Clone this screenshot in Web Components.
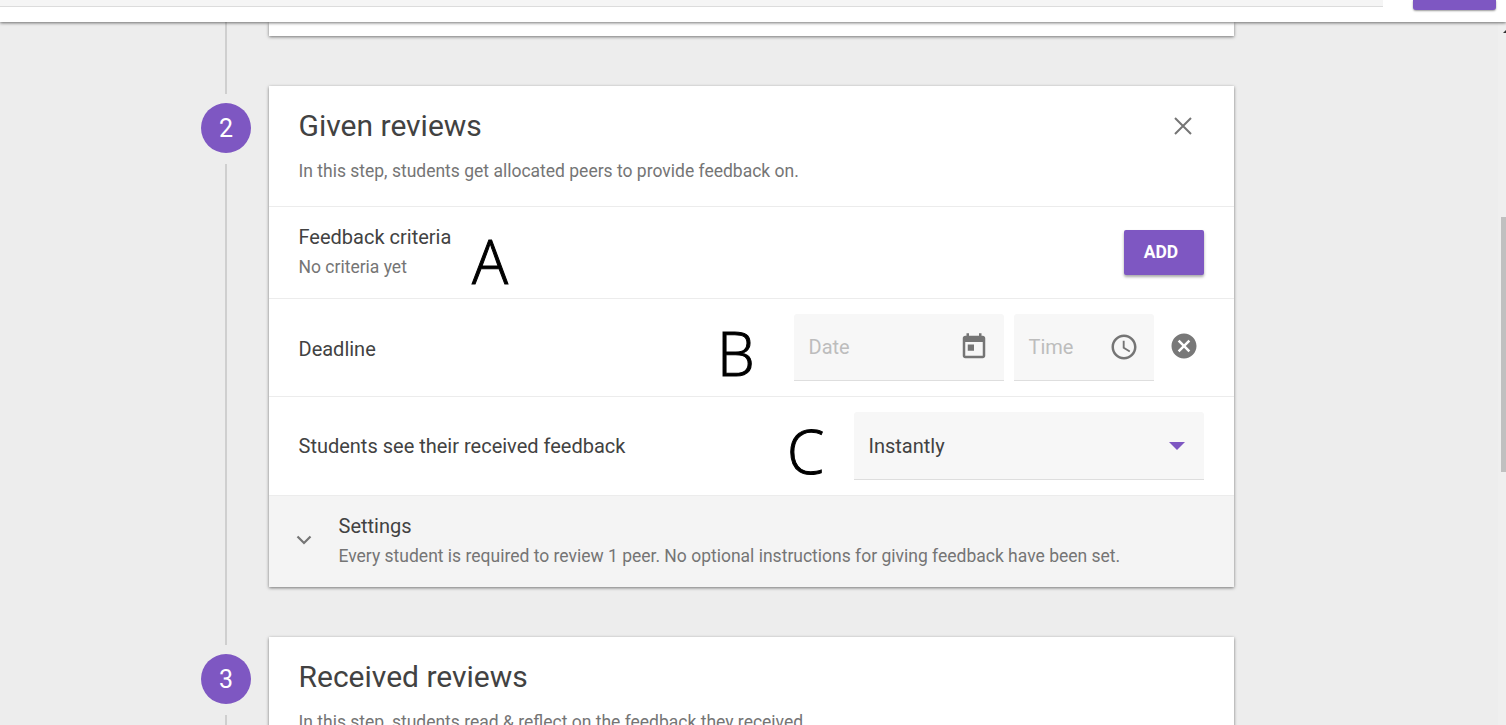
<!DOCTYPE html>
<html>
<head>
<meta charset="utf-8">
<title>Peer review</title>
<style>
  html, body { margin: 0; height: 100%; }
  body {
    overflow: hidden;
    background: #ededed;
    font-family: Roboto, "Liberation Sans", sans-serif;
    color: #424242;
  }
  .page { display: flex; flex-direction: column; height: 725px; }
  .body-row { display: flex; flex: 1; min-height: 0; }
  .content { flex: 1; min-width: 0; }
</style>
</head>
<body>
<template id="top-bar-tpl">
  <style>
    :host { display: flex; flex: none; position: relative; z-index: 5; height: 22px; background: #fff; box-shadow: 0 1px 3px rgba(0,0,0,.55); }
    .field { width: 1383px; height: 6px; background: #f5f5f5; border-bottom: 1px solid #dcdcdc; }
    .save { width: 83px; height: 10px; margin-left: 30px; background: #7e57c2; border-radius: 0 0 3px 3px; box-shadow: 0 1px 2px rgba(0,0,0,.4); }
  </style>
  <div class="field"></div>
  <div class="save"></div>
</template>

<template id="review-step-tpl">
  <style>
    :host { display: grid; grid-template-columns: 50px 965px; column-gap: 18px; padding-left: 201px; }
    .rail { display: flex; flex-direction: column; align-items: center; }
    .line { width: 2px; background: #cfcfcf; }
    .line.before { height: 58px; margin-bottom: 9px; }
    .line.after { flex: 1; margin-top: 11px; }
    .num { width: 50px; height: 50px; flex: none; border-radius: 50%; background: #7e57c2; color: #fff; font-size: 25px; line-height: 52px; text-align: center; }
    .card { margin-top: 50px; background: #fff; box-shadow: 0 1px 3px rgba(0,0,0,.5); }
    header { position: relative; height: 121px; padding: 24px 30px 0 29.5px; box-sizing: border-box; border-bottom: 1px solid #ececec; }
    h2 { margin: 0; font-size: 30px; font-weight: 400; line-height: 32px; color: #424242; }
    p { margin: 16px 0 0; font-size: 17.5px; line-height: 26px; color: #757575; }
    .close { position: absolute; top: 30px; right: 41px; width: 20px; height: 20px; display: block; }
    :host([no-close]) .close { display: none; }
  </style>
  <div class="rail">
    <div class="line before"></div>
    <div class="num"><slot name="num"></slot></div>
    <div class="line after"></div>
  </div>
  <div class="card">
    <header>
      <h2><slot name="title"></slot></h2>
      <p><slot name="intro"></slot></p>
      <svg class="close" viewBox="0 0 20 20" fill="none" stroke="#757575" stroke-width="2"><path d="M2 2l16 16M18 2L2 18"/></svg>
    </header>
    <slot></slot>
  </div>
</template>

<template id="step-row-tpl">
  <style>
    :host { display: flex; align-items: center; position: relative; padding: 0 30px 0 29.5px; border-bottom: 1px solid #ececec; font-size: 20px; color: #424242; height: var(--row-h, 97px); box-sizing: border-box; }
    .label { flex: 1; min-width: 0; }
    .mark { position: absolute; top: var(--mark-top, 0); left: var(--mark-left, 0); font: 300 60px/60px "Open Sans", sans-serif; -webkit-text-stroke: 1px #000; color: #000; }
  </style>
  <div class="label"><slot name="label"></slot></div>
  <slot></slot>
  <div class="mark"><slot name="mark"></slot></div>
</template>

<template id="filled-field-tpl">
  <style>
    :host { display: flex; align-items: center; box-sizing: border-box; height: 67px; padding: 0 15.5px 0 14.5px; background: #f7f7f7; border-bottom: 1px solid #dedede; border-radius: 3px 3px 0 0; font-size: 20px; color: #bdbdbd; }
    .text { flex: 1; min-width: 0; }
    ::slotted(svg) { display: block; flex: none; }
  </style>
  <div class="text"><slot></slot></div>
  <slot name="icon"></slot>
</template>

<template id="raised-button-tpl">
  <style>
    :host { display: inline-block; box-sizing: border-box; width: 80px; height: 45px; padding-right: 6px; line-height: 45px; text-align: center; background: #7e57c2; color: #fff; font-size: 17.5px; font-weight: 700; border-radius: 2px; box-shadow: 0 2px 3px rgba(0,0,0,.35); }
  </style>
  <slot></slot>
</template>

<template id="settings-row-tpl">
  <style>
    :host { display: flex; align-items: center; height: 91px; box-sizing: border-box; background: #f4f4f4; padding: 0 0 1px 27px; }
    svg { flex: none; width: 16px; height: 10px; margin: 0 26.5px 2px 0; }
    .title { font-size: 20px; line-height: 30px; color: #424242; }
    .desc { font-size: 17.5px; line-height: 30px; color: #757575; }
  </style>
  <svg viewBox="0 0 16 10" fill="none" stroke="#757575" stroke-width="2.2"><path d="M1.5 1.5L8 8l6.5-6.5"/></svg>
  <div>
    <div class="title"><slot name="title"></slot></div>
    <div class="desc"><slot name="desc"></slot></div>
  </div>
</template>

<div class="page">
  <top-bar></top-bar>
  <div class="body-row">
    <div class="content">
      <stub-card></stub-card>
      <review-step>
        <span slot="num">2</span>
        <span slot="title">Given reviews</span>
        <span slot="intro">In this step, students get allocated peers to provide feedback on.</span>
        <step-row style="--row-h:92px;--mark-left:203px;--mark-top:24px">
          <div slot="label" style="padding-bottom:2px">
            <div style="line-height:30px">Feedback criteria</div>
            <div style="line-height:30px;font-size:17.5px;color:#757575">No criteria yet</div>
          </div>
          <span slot="mark">A</span>
          <raised-button>ADD</raised-button>
        </step-row>
        <step-row style="--row-h:98px;--mark-left:448px;--mark-top:24px">
          <div slot="label" style="padding-top:2px">Deadline</div>
          <span slot="mark">B</span>
          <filled-field style="width:210px;margin-right:10px">Date
            <svg slot="icon" width="30" height="30" viewBox="0 0 24 24" fill="#757575"><path d="M19 3h-1V1h-2v2H8V1H6v2H5c-1.11 0-1.99.9-1.99 2L3 19c0 1.1.89 2 2 2h14c1.1 0 2-.9 2-2V5c0-1.1-.9-2-2-2zm0 16H5V8h14v11zM7 10h5v5H7z"/></svg>
          </filled-field>
          <filled-field style="width:140px">Time
            <svg slot="icon" width="30" height="30" viewBox="0 0 24 24" fill="#757575"><path d="M11.99 2C6.47 2 2 6.48 2 12s4.47 10 9.99 10C17.52 22 22 17.52 22 12S17.52 2 11.99 2zM12 20c-4.42 0-8-3.58-8-8s3.58-8 8-8 8 3.58 8 8-3.58 8-8 8zm.5-13H11v6l5.25 3.15.75-1.23-4.5-2.67z"/></svg>
          </filled-field>
          <svg width="30" height="30" viewBox="0 0 24 24" fill="#787878" style="margin:0 5.5px 4px 14.5px;flex:none"><path d="M12 2C6.47 2 2 6.47 2 12s4.47 10 10 10 10-4.47 10-10S17.53 2 12 2zm5 13.59L15.59 17 12 13.41 8.41 17 7 15.59 10.59 12 7 8.41 8.41 7 12 10.59 15.59 7 17 8.41 13.41 12 17 15.59z"/></svg>
        </step-row>
        <step-row style="--row-h:99px;--mark-left:518px;--mark-top:24px">
          <span slot="label">Students see their received feedback</span>
          <span slot="mark">C</span>
          <filled-field style="width:350px;height:68px;color:#424242">Instantly
            <svg slot="icon" width="16" height="8" viewBox="0 0 16 8" fill="#7e57c2" style="margin-right:4px"><path d="M0 0h16L8 8z"/></svg>
          </filled-field>
        </step-row>
        <settings-row>
          <span slot="title">Settings</span>
          <span slot="desc">Every student is required to review 1 peer. No optional instructions for giving feedback have been set.</span>
        </settings-row>
      </review-step>
      <review-step no-close>
        <span slot="num">3</span>
        <span slot="title">Received reviews</span>
        <span slot="intro">In this step, students read &amp; reflect on the feedback they received.</span>
      </review-step>
    </div>
    <page-scrollbar></page-scrollbar>
  </div>
</div>

<script>
function useTemplate(id) {
  return class extends HTMLElement {
    constructor() {
      super();
      const shadow = this.attachShadow({ mode: "open" });
      shadow.appendChild(document.getElementById(id).content.cloneNode(true));
    }
  };
}

customElements.define("top-bar", useTemplate("top-bar-tpl"));
customElements.define("review-step", useTemplate("review-step-tpl"));
customElements.define("step-row", useTemplate("step-row-tpl"));
customElements.define("filled-field", useTemplate("filled-field-tpl"));
customElements.define("raised-button", useTemplate("raised-button-tpl"));
customElements.define("settings-row", useTemplate("settings-row-tpl"));

// tail of the card above, scrolled mostly out of view
class StubCard extends HTMLElement {
  constructor() {
    super();
    this.attachShadow({ mode: "open" }).innerHTML = `
      <style>
        :host { display: grid; grid-template-columns: 50px 965px; column-gap: 18px; padding-left: 201px; height: 14px; }
        .line { width: 2px; background: #cfcfcf; justify-self: center; }
        .card { background: #fff; box-shadow: 0 1px 3px rgba(0,0,0,.5); }
      </style>
      <div class="line"></div>
      <div class="card"></div>`;
  }
}
customElements.define("stub-card", StubCard);

class PageScrollbar extends HTMLElement {
  constructor() {
    super();
    this.attachShadow({ mode: "open" }).innerHTML = `
      <style>
        :host { display: flex; flex-direction: column; align-items: flex-end; flex: none; width: 8px; background: #efefef; }
        svg { display: block; margin-top: 8px; }
        .thumb { width: 5px; height: 255px; margin-top: 184px; background: #c0c0c0; }
      </style>
      <svg width="3" height="3" viewBox="0 0 3 3" fill="#333"><path d="M0 3l3-3v3z"/></svg>
      <div class="thumb"></div>`;
  }
}
customElements.define("page-scrollbar", PageScrollbar);
</script>
</body>
</html>
